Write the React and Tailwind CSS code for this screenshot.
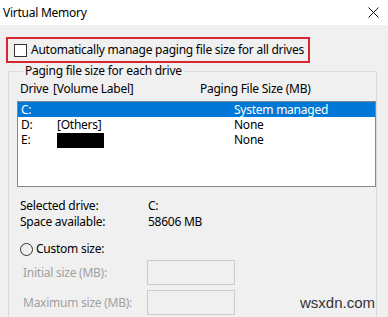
import React from 'react';

const rows = [
  { drive: 'C:', label: '', size: 'System managed', selected: true },
  { drive: 'D:', label: '[Others]', size: 'None' },
  { drive: 'E:', label: null, size: 'None' },
];

export default function App() {
  return (
    <div className="relative w-[388px] h-[317px] overflow-hidden bg-[#f0f0f0] text-[12px] leading-[16px] tracking-[-0.25px] whitespace-nowrap text-black font-['Noto_Sans',sans-serif]">
      {/* Title bar */}
      <div className="h-[25px] bg-white flex items-center justify-between pl-[3px] pr-[9px]">
        <span className="text-[12px]">Virtual Memory</span>
        <svg width="11" height="11" viewBox="0 0 11 11" className="mb-[1px]">
          <path d="M0.5 0.5 L10.5 10.5 M10.5 0.5 L0.5 10.5" stroke="#111" strokeWidth="1" />
        </svg>
      </div>

      {/* Auto manage checkbox, highlighted */}
      <div className="mt-[12px] ml-[6px] w-[304px] h-[26px] border-2 border-[#d8262f] flex items-center pl-[6px]">
        <span className="w-[13px] h-[13px] border border-[#333] bg-white" />
        <span className="ml-[4px]">Automatically manage paging file size for all drives</span>
      </div>

      {/* Group box */}
      <fieldset className="ml-[8px] w-[369px] h-[300px] border border-[#dcdcdc] pl-[8px]">
        <legend className="ml-[6px] px-[2px]">Paging file size for each drive</legend>

        <div className="flex mt-[2px] pl-[3px]">
          <span className="w-[33px]">Drive</span>
          <span className="w-[147px]">[Volume Label]</span>
          <span>Paging File Size (MB)</span>
        </div>

        <div className="mt-[4px] h-[86px] border border-[#828790] bg-white">
          {rows.map((r) => (
            <div
              key={r.drive}
              className={`h-[15px] flex items-center leading-[15px] ${r.selected ? 'bg-[#0078d7] text-white' : ''}`}
            >
              <span className="w-[39px] pl-[3px]">{r.drive}</span>
              {r.label === null ? (
                <span className="w-[47px] h-[15px] bg-black mt-[1px]" />
              ) : (
                <span className="w-[47px]">{r.label}</span>
              )}
              <span className="ml-[130px]">{r.size}</span>
            </div>
          ))}
        </div>

        <div className="mt-[11px] pl-[3px]">
          <div className="flex">
            <span className="w-[128px]">Selected drive:</span>
            <span>C:</span>
          </div>
          <div className="flex">
            <span className="w-[128px]">Space available:</span>
            <span>58606 MB</span>
          </div>
        </div>

        <div className="mt-[11px] flex items-center pl-[3px]">
          <span className="w-[13px] h-[13px] rounded-full border border-[#333] bg-transparent" />
          <span className="ml-[3px]">Custom size:</span>
        </div>

        <div className="mt-[3px] flex items-center text-[#a0a0a0] pl-[6px]">
          <span className="w-[124px]">Initial size (MB):</span>
          <span className="w-[88px] h-[25px] border border-[#cccccc]" />
        </div>
        <div className="mt-[5px] flex items-center text-[#a0a0a0] pl-[6px]">
          <span className="w-[124px]">Maximum size (MB):</span>
          <span className="w-[88px] h-[25px] border border-[#cccccc]" />
        </div>
      </fieldset>

      {/* Watermark */}
      <span className="absolute left-[300px] top-[294px] text-[15px] leading-[18px] tracking-normal text-[#333] font-['Liberation_Sans',sans-serif]">
        wsxdn.com
      </span>
    </div>
  );
}
